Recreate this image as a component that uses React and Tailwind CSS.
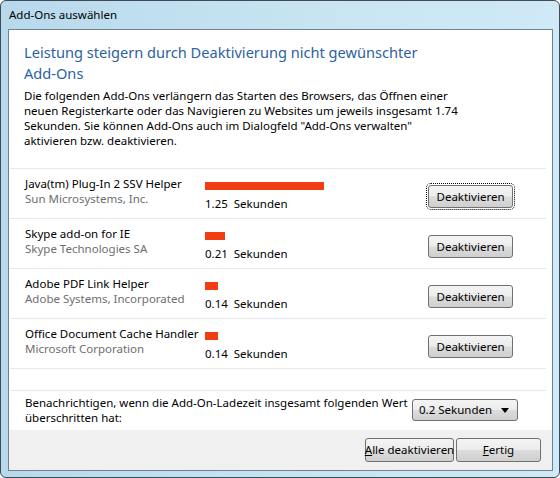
import React from "react";

const addons = [
  { name: "Java(tm) Plug-In 2 SSV Helper", company: "Sun Microsystems, Inc.", time: "1.25", bar: 119, focused: true },
  { name: "Skype add-on for IE", company: "Skype Technologies SA", time: "0.21", bar: 20 },
  { name: "Adobe PDF Link Helper", company: "Adobe Systems, Incorporated", time: "0.14", bar: 13 },
  { name: "Office Document Cache Handler", company: "Microsoft Corporation", time: "0.14", bar: 13 },
];

const btn =
  "h-[23px] rounded-[3px] border border-[#707070] bg-[linear-gradient(180deg,#f4f4f4_0%,#ececec_48%,#dcdcdc_52%,#cfcfcf_100%)] text-[11.5px] text-black flex items-center justify-center whitespace-nowrap";

function AddonRow({ item }) {
  return (
    <div className="flex h-[50px] border-b border-[#e2eaf0]">
      <div className="w-[195px] pl-[15px] pt-[7px] leading-[15px]">
        <div className="text-[11.5px] text-black whitespace-nowrap">{item.name}</div>
        <div className="text-[11.5px] text-[#6e6e6e] whitespace-nowrap">{item.company}</div>
      </div>
      <div className="flex flex-col">
        <div className="mt-[13px] h-[8px] bg-[#f23d12]" style={{ width: item.bar }} />
        <div className="mt-[6px] text-[11.5px] leading-[15px] text-black whitespace-pre">{item.time}  Sekunden</div>
      </div>
      <div className="ml-auto mr-[33px] mt-[16px]">
        <div className={item.focused ? "outline-1 outline-dotted outline-black outline-offset-[1px] rounded-[3px]" : ""}>
          <button className={`${btn} w-[85px]`}>Deaktivieren</button>
        </div>
      </div>
    </div>
  );
}

export default function App() {
  return (
    <div
      className="w-[560px] h-[478px] flex flex-col rounded-[6px] border border-[#3f4c57] bg-[linear-gradient(90deg,#b8d9ec,#c9e5f3_60%,#cfe9f6)] pl-[7px] pr-[6px] pb-[6px]"
      style={{ fontFamily: '"Noto Sans", "Open Sans", sans-serif' }}
    >
      <div className="h-[28px] flex items-center pl-[1px] text-[11.5px] text-black">Add-Ons auswählen</div>
      <div className="flex-1 flex flex-col border border-[#6f8292] bg-white">
        <div className="h-[138px] pl-[15px] pt-[12px] whitespace-nowrap">
          <h1 className="text-[14.6px] leading-[21px] text-[#2c62a2] font-normal">
            Leistung steigern durch Deaktivierung nicht gewünschter
            <br />
            Add-Ons
          </h1>
          <p className="mt-[4px] text-[11.5px] leading-[15px] text-black">
            Die folgenden Add-Ons verlängern das Starten des Browsers, das Öffnen einer
            <br />
            neuen Registerkarte oder das Navigieren zu Websites um jeweils insgesamt 1.74
            <br />
            Sekunden. Sie können Add-Ons auch im Dialogfeld "Add-Ons verwalten"
            <br />
            aktivieren bzw. deaktivieren.
          </p>
        </div>
        <div className="ml-[1px] mr-[6px] border-t border-[#e2eaf0]">
          {addons.map((a) => (
            <AddonRow key={a.name} item={a} />
          ))}
          <div className="h-[22px] border-b border-[#e2eaf0]" />
        </div>
        <div className="h-[39px] flex pl-[16px] pr-[34px]">
          <div className="pt-[4px] text-[11.5px] leading-[15px] text-black whitespace-nowrap">
            Benachrichtigen, wenn die Add-On-Ladezeit insgesamt folgenden Wert
            <br />
            überschritten hat:
          </div>
          <div className="ml-auto mt-[8px] h-[22px] w-[106px] rounded-[3px] border border-[#707070] bg-[linear-gradient(180deg,#f4f4f4_0%,#ececec_48%,#dcdcdc_52%,#cfcfcf_100%)] flex items-center pl-[6px] pr-[8px] text-[11.5px] text-black">
            <span>0.2 Sekunden</span>
            <svg className="ml-auto" width="8" height="5" viewBox="0 0 8 5">
              <path d="M0 0h8L4 5z" fill="#000" />
            </svg>
          </div>
        </div>
        <div className="flex-1 bg-[#f0f0f0] flex justify-end items-start pt-[8px] pr-[11px] gap-[2px]">
          <button className={`${btn} h-[24px] w-[89px]`}>
            <span className="underline">A</span>lle deaktivieren
          </button>
          <button className={`${btn} h-[24px] w-[85px]`}>
            <span className="underline">F</span>ertig
          </button>
        </div>
      </div>
    </div>
  );
}
